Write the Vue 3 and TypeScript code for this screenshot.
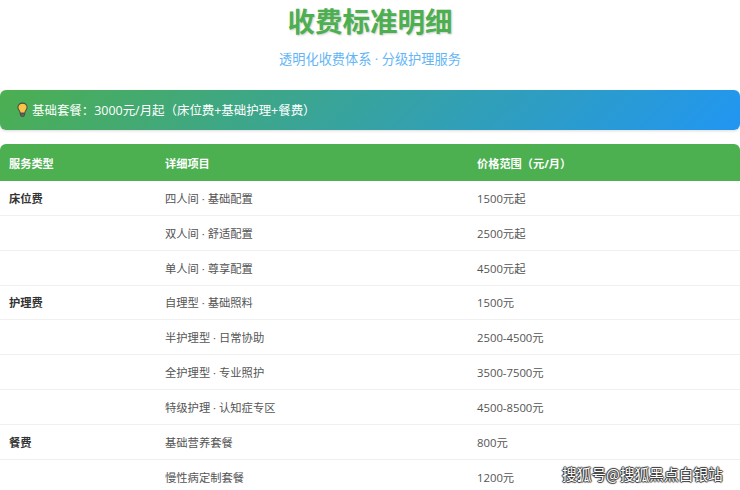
<script setup lang="ts">
interface Row { type: string; item: string; price: string }
const rows: Row[] = [
  { type: '床位费', item: '四人间 · 基础配置', price: '1500元起' },
  { type: '', item: '双人间 · 舒适配置', price: '2500元起' },
  { type: '', item: '单人间 · 尊享配置', price: '4500元起' },
  { type: '护理费', item: '自理型 · 基础照料', price: '1500元' },
  { type: '', item: '半护理型 · 日常协助', price: '2500-4500元' },
  { type: '', item: '全护理型 · 专业照护', price: '3500-7500元' },
  { type: '', item: '特级护理 · 认知症专区', price: '4500-8500元' },
  { type: '餐费', item: '基础营养套餐', price: '800元' },
  { type: '', item: '慢性病定制套餐', price: '1200元' },
]
</script>

<template>
  <div class="page">
    <h1 class="title">收费标准明细</h1>
    <p class="sub">透明化收费体系 · 分级护理服务</p>
    <div class="banner">
      <svg class="bulb" width="11" height="16" viewBox="0 0 12 17">
        <path d="M6 1C3 1 1 3 1 5.6c0 2.2 1.5 3.2 2.2 5l.3 1.4h5l.3-1.4c.7-1.8 2.2-2.8 2.2-5C11 3 9 1 6 1z" fill="#fbc34a" stroke="#4a4a3a" stroke-width="1.1"/>
        <path d="M3.8 12h4.4v2.2c0 .8-.7 1.3-1.2 1.3H5c-.5 0-1.2-.5-1.2-1.3z" fill="#5f6368" stroke="#444" stroke-width=".8"/>
      </svg>
      <span>基础套餐：3000元/月起（床位费+基础护理+餐费）</span>
    </div>
    <table class="tbl">
      <colgroup>
        <col class="c1" /><col class="c2" /><col class="c3" />
      </colgroup>
      <thead>
        <tr><th>服务类型</th><th>详细项目</th><th>价格范围（元/月）</th></tr>
      </thead>
      <tbody>
        <tr v-for="(r, i) in rows" :key="i">
          <td class="type">{{ r.type }}</td>
          <td>{{ r.item }}</td>
          <td>{{ r.price }}</td>
        </tr>
      </tbody>
    </table>
    <div class="mark">搜狐号@搜狐黑点白银站</div>
  </div>
</template>

<style>
html, body { margin: 0; overflow: hidden; background: #fff; }
</style>

<style scoped>
.page {
  position: relative;
  width: 740px;
  height: 490px;
  overflow: hidden;
  font-family: "Open Sans", "Noto Sans CJK SC", sans-serif;
}
.title {
  margin: 0;
  height: 41px;
  line-height: 41px;
  text-align: center;
  font-size: 27.5px;
  font-weight: 700;
  color: #4caf50;
  text-shadow: 1px 1px 2px rgba(0, 0, 0, 0.2);
  font-family: "Noto Sans CJK SC", sans-serif;
}
.sub {
  margin: 7px 0 0;
  height: 22px;
  line-height: 22px;
  text-align: center;
  font-size: 13.2px;
  color: #64b5f6;
}
.banner {
  margin-top: 20px;
  height: 40px;
  display: flex;
  align-items: center;
  gap: 4px;
  padding-left: 17px;
  border-radius: 6px;
  background: linear-gradient(135deg, #4caf50, #2196f3);
  color: #fff;
  font-size: 12.45px;
  box-shadow: 0 1px 3px rgba(0, 0, 0, 0.15);
}
.bulb { flex: none; }
.tbl {
  width: 740px;
  margin-top: 14px;
  border-collapse: separate;
  border-spacing: 0;
  table-layout: fixed;
  font-size: 11.3px;
  color: #555;
}
.c1 { width: 156px; }
.c2 { width: 312px; }
.c3 { width: 272px; }
th {
  height: 37px;
  padding: 0 9px;
  background: #4caf50;
  color: #fff;
  font-weight: 700;
  font-size: 11.2px;
  text-align: left;
}
th:first-child { border-top-left-radius: 6px; }
th:last-child { border-top-right-radius: 6px; }
td {
  height: 33.85px;
  padding: 0 9px;
  border-bottom: 1px solid #f0f0f0;
}
td.type {
  font-weight: 700;
  color: #333;
}
.mark {
  position: absolute;
  left: 562px;
  top: 465px;
  line-height: 18px;
  font-size: 14.7px;
  color: #fff;
  white-space: nowrap;
  font-family: "Noto Sans CJK SC", sans-serif;
  text-shadow: 0 0 1px #333, 1px 0 1px #333, -1px 0 1px #333, 0 1px 1px #333, 0 -1px 1px #333;
}
</style>
